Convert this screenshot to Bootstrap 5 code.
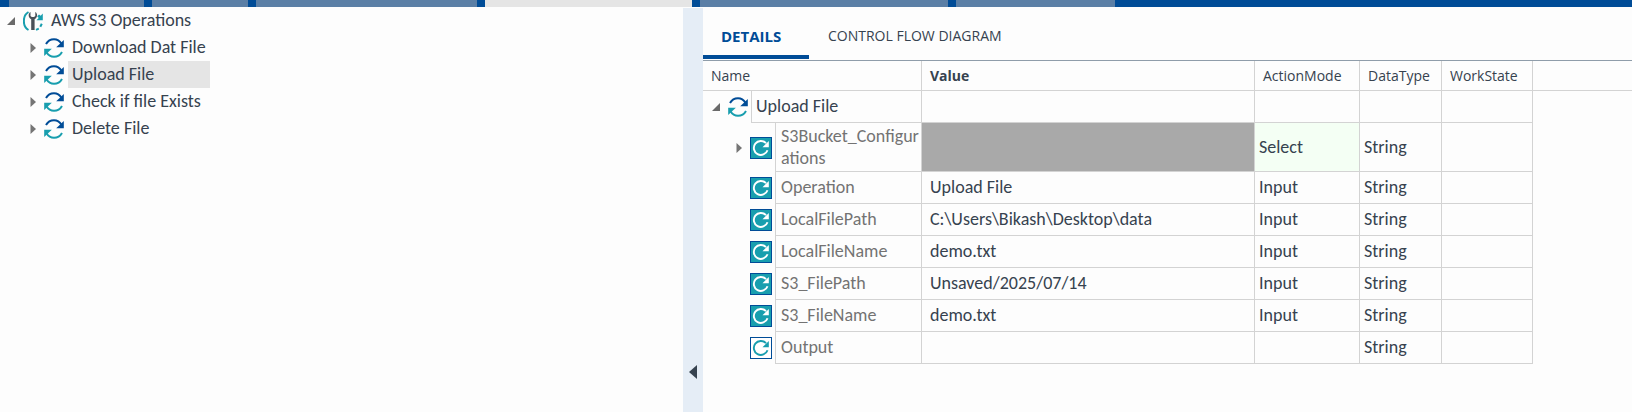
<!DOCTYPE html>
<html lang="en">
<head>
<meta charset="utf-8">
<meta name="viewport" content="width=device-width, initial-scale=1">
<title>AWS S3 Operations</title>
<link href="https://cdn.jsdelivr.net/npm/bootstrap@5.3.0/dist/css/bootstrap.min.css" rel="stylesheet">
<script src="https://cdn.jsdelivr.net/npm/bootstrap@5.3.0/dist/js/bootstrap.bundle.min.js"></script>
<style>
  :root { --ink: #36424f; --brand: #004c97; --teal: #189eae; --rule: #d3d3d3; }
  body { background: #fdfdfd; color: var(--ink); font: 18px/22px Carlito, Lato, sans-serif; }
  button { font: inherit; color: inherit; background: none; border: 0; padding: 0; }

  .doc-strip { height: 7px; background: var(--brand); gap: 8px; padding-left: 9px; }
  .doc-strip span { background: #5b7fa6; }
  .doc-strip .current { background: #e5e5e5; }

  .workspace { display: grid; grid-template-columns: 683fr 20px 929fr; }
  .splitter { background: #e5edf6; margin-top: 1px; padding-bottom: 33px; }

  .tree-row { height: 27px; padding-left: 7px; gap: 8px; }
  .tree-row.child-row { padding-left: 30px; }
  .toggle { width: 8px; display: flex; }
  .child-row .toggle, .tall .toggle { width: 6px; }
  .tree-label { height: 27px; padding: 0 4px 2px; margin-left: -4px; white-space: nowrap; text-align: left; }
  .tree-label.selected { background: #e5e5e5; width: 142px; }

  .tab-bar { height: 54px; border-bottom: 1px solid #8f9daa; font: 14px/20px "Open Sans", sans-serif; gap: 1px; }
  .tab-bar .nav-link { color: var(--ink); border: 0; border-bottom: 4px solid transparent; border-radius: 0; padding: 9px 18px 0; height: 52px; background: none; }
  .tab-bar .nav-link.active { width: 106px; padding-right: 0; text-align: left; font-size: 15px; font-weight: 700; color: var(--brand); border-color: var(--brand); }

  .grid-table { table-layout: fixed; width: 100%; border-collapse: separate; border-spacing: 0; }
  .grid-table th, .grid-table td { height: 32px; padding: 0 4px 1px; vertical-align: middle; border: solid var(--rule); border-width: 0 1px 1px 0; }
  .grid-table th { height: 30px; padding: 0 8px; font: 14px/20px "Open Sans", sans-serif; white-space: nowrap; }
  .grid-table th.key { font-weight: 700; }
  .grid-table th:last-child { border-right: 0; }
  .grid-table td.gutter { border-bottom: 0; padding: 0; }
  .grid-table td.lead-in { border: 0; }
  .grid-table td.param { color: #737373; padding: 0 0 1px 5px; overflow-wrap: anywhere; }
  .grid-table td.val { padding: 0 8px 1px; }
  .grid-table tr.tall td { height: 49px; }
  .grid-table td.masked { background: #a9a9a9; }
  .grid-table td.choice { background: #f4fff4; }
  .icon-cell { display: flex; align-items: center; justify-content: flex-end; gap: 8px; padding-right: 3px; }
  .icon-cell svg, .tree-row svg { display: block; flex: none; }
</style>
</head>
<body>
<svg class="d-none" aria-hidden="true">
  <symbol id="open" viewBox="0 0 8 8"><path d="M8 0v8H0z" fill="#6a6a6a"/></symbol>
  <symbol id="closed" viewBox="0 0 6 10"><path d="M.5 0v10L6 5z" fill="#757575"/></symbol>
  <symbol id="sync" viewBox="0 0 20 20">
    <path d="M2 6C3.800 2.800 6.500 1.200 10 1.200c3.300 0 5.800 1.700 7.300 4.300" fill="none" stroke="#004c97" stroke-width="2"/>
    <path d="M19.800 2v7.200h-7.600z" fill="#004c97"/>
    <path d="M18 14c-1.800 3.200-4.500 4.800-8 4.800-3.300 0-5.800-1.700-7.300-4.300" fill="none" stroke="#189eae" stroke-width="2"/>
    <path d="M.2 18v-7.200h7.600z" fill="#189eae"/>
  </symbol>
  <symbol id="tools" viewBox="0 0 20 20">
    <path d="M5.500 1C-.7 4.500-.7 15.500 5.500 19" fill="none" stroke="#189eae" stroke-width="2"/>
    <path d="M13 18.800l2.800-1.200M17.300 15.800l1.500-3" fill="none" stroke="#189eae" stroke-width="2"/>
    <path d="M19.800 2.500v6.700h-6.300l2.200-2.300-1.500-1.700 1.800-1.700 1.700 1.200z" fill="#189eae"/>
    <path d="M7.500 1C5.200 2.200 4.800 6.500 8.200 8.300V19h3.400V8.300C15 6.500 14.600 2.200 12.300 1v4L11 6H8.800L7.500 5z" fill="#4a5058"/>
  </symbol>
  <symbol id="loop" viewBox="0 0 22 22">
    <path d="M17.500 13.200A7 7 0 1 1 16 6.200" fill="none" stroke="currentColor" stroke-width="1.900"/>
    <path d="M18.800 4v6.200h-6.300z" fill="currentColor"/>
  </symbol>
  <symbol id="param" viewBox="0 0 22 22">
    <rect x=".5" y=".5" width="21" height="21" fill="#189eae" stroke="#004c97"/>
    <use href="#loop" color="#fff"/>
  </symbol>
  <symbol id="result" viewBox="0 0 22 22">
    <rect x=".5" y=".5" width="21" height="21" fill="#fff" stroke="#004c97"/>
    <use href="#loop" color="#189eae"/>
  </symbol>
</svg>

<div class="min-vh-100 d-flex flex-column">
  <div class="doc-strip d-flex">
    <span style="width:135px"></span><span style="width:96px"></span><span style="width:221px"></span><span class="current" style="width:207px"></span><span style="width:248px"></span><span style="width:159px"></span>
  </div>

  <div class="workspace flex-grow-1">
    <nav aria-label="Operations">
      <ul class="list-unstyled mb-0">
        <li class="tree-row d-flex align-items-center">
          <button class="toggle" aria-label="Collapse"><svg width="8" height="8"><use href="#open"/></svg></button>
          <svg width="20" height="20"><use href="#tools"/></svg>
          <button class="tree-label">AWS S3 Operations</button>
        </li>
        <li class="tree-row child-row d-flex align-items-center">
          <button class="toggle" aria-label="Expand"><svg width="6" height="10"><use href="#closed"/></svg></button>
          <svg width="20" height="20"><use href="#sync"/></svg>
          <button class="tree-label">Download Dat File</button>
        </li>
        <li class="tree-row child-row d-flex align-items-center">
          <button class="toggle" aria-label="Expand"><svg width="6" height="10"><use href="#closed"/></svg></button>
          <svg width="20" height="20"><use href="#sync"/></svg>
          <button class="tree-label selected">Upload File</button>
        </li>
        <li class="tree-row child-row d-flex align-items-center">
          <button class="toggle" aria-label="Expand"><svg width="6" height="10"><use href="#closed"/></svg></button>
          <svg width="20" height="20"><use href="#sync"/></svg>
          <button class="tree-label">Check if file Exists</button>
        </li>
        <li class="tree-row child-row d-flex align-items-center">
          <button class="toggle" aria-label="Expand"><svg width="6" height="10"><use href="#closed"/></svg></button>
          <svg width="20" height="20"><use href="#sync"/></svg>
          <button class="tree-label">Delete File</button>
        </li>
      </ul>
    </nav>

    <div class="splitter d-flex align-items-end justify-content-center">
      <button class="d-flex" aria-label="Collapse pane"><svg width="8" height="14" viewBox="0 0 8 14"><path d="M8 0v14L0 7z" fill="#36424f"/></svg></button>
    </div>

    <main>
      <div class="tab-bar nav" role="tablist">
        <button class="nav-link active" role="tab" aria-selected="true">DETAILS</button>
        <button class="nav-link" role="tab" aria-selected="false">CONTROL FLOW DIAGRAM</button>
      </div>
      <table class="grid-table">
        <colgroup><col style="width:49px"><col style="width:24px"><col style="width:146px"><col style="width:333px"><col style="width:105px"><col style="width:82px"><col style="width:91px"><col></colgroup>
        <thead>
          <tr><th colspan="3" class="fw-normal">Name</th><th class="key">Value</th><th class="fw-normal">ActionMode</th><th class="fw-normal">DataType</th><th class="fw-normal">WorkState</th><th></th></tr>
        </thead>
        <tbody>
          <tr>
            <td class="gutter"><div class="icon-cell"><button class="toggle" aria-label="Collapse"><svg width="8" height="8"><use href="#open"/></svg></button><svg width="20" height="20"><use href="#sync"/></svg></div></td>
            <td colspan="2">Upload File</td><td class="val"></td><td></td><td></td><td></td><td class="lead-in"></td>
          </tr>
          <tr class="tall">
            <td class="gutter" colspan="2"><div class="icon-cell"><button class="toggle" aria-label="Expand"><svg width="6" height="10"><use href="#closed"/></svg></button><svg width="22" height="22"><use href="#param"/></svg></div></td>
            <td class="param">S3Bucket_Configurations</td><td class="val masked"></td><td class="choice">Select</td><td>String</td><td></td><td class="lead-in"></td>
          </tr>
          <tr>
            <td class="gutter" colspan="2"><div class="icon-cell"><svg width="22" height="22"><use href="#param"/></svg></div></td>
            <td class="param">Operation</td><td class="val">Upload File</td><td>Input</td><td>String</td><td></td><td class="lead-in"></td>
          </tr>
          <tr>
            <td class="gutter" colspan="2"><div class="icon-cell"><svg width="22" height="22"><use href="#param"/></svg></div></td>
            <td class="param">LocalFilePath</td><td class="val">C:\Users\Bikash\Desktop\data</td><td>Input</td><td>String</td><td></td><td class="lead-in"></td>
          </tr>
          <tr>
            <td class="gutter" colspan="2"><div class="icon-cell"><svg width="22" height="22"><use href="#param"/></svg></div></td>
            <td class="param">LocalFileName</td><td class="val">demo.txt</td><td>Input</td><td>String</td><td></td><td class="lead-in"></td>
          </tr>
          <tr>
            <td class="gutter" colspan="2"><div class="icon-cell"><svg width="22" height="22"><use href="#param"/></svg></div></td>
            <td class="param">S3_FilePath</td><td class="val">Unsaved/2025/07/14</td><td>Input</td><td>String</td><td></td><td class="lead-in"></td>
          </tr>
          <tr>
            <td class="gutter" colspan="2"><div class="icon-cell"><svg width="22" height="22"><use href="#param"/></svg></div></td>
            <td class="param">S3_FileName</td><td class="val">demo.txt</td><td>Input</td><td>String</td><td></td><td class="lead-in"></td>
          </tr>
          <tr>
            <td class="gutter" colspan="2"><div class="icon-cell"><svg width="22" height="22"><use href="#result"/></svg></div></td>
            <td class="param">Output</td><td class="val"></td><td></td><td>String</td><td></td><td class="lead-in"></td>
          </tr>
        </tbody>
      </table>
    </main>
  </div>
</div>
</body>
</html>
